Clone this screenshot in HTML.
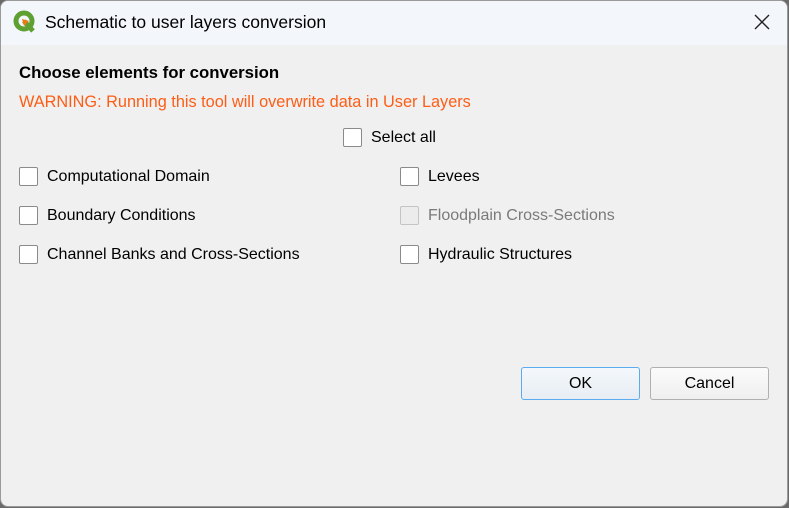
<!DOCTYPE html>
<html><head><style>
body{margin:0;width:789px;height:508px;background:#6a6a6a;font-family:"Liberation Sans",sans-serif;overflow:hidden;position:relative}
.win{position:absolute;left:0;top:0;width:788px;height:507px;background:#f0f0f0;border-radius:8px;overflow:hidden;border:1px solid #9a9a9a;box-sizing:border-box}
.title{position:absolute;left:0;top:0;right:0;height:44px;background:#f3f6fb}
.t{position:absolute;font-size:16px;color:#000;white-space:nowrap}
.cb{position:absolute;width:19px;height:19px;background:#fff;border:1px solid #8a8a8a;border-radius:2px;box-sizing:border-box}
.cb.d{background:#ececec;border-color:#c4c4c4}
.btn{position:absolute;top:366px;width:119px;height:33px;box-sizing:border-box;border:1px solid #b0b0b0;border-radius:3px;background:linear-gradient(#fbfbfb,#efefef);font-size:16px;text-align:center;line-height:31px}
</style></head><body>
<div class="win">
<div class="title">
<svg style="position:absolute;left:12px;top:9px" width="24" height="24" viewBox="0 0 24 24">
<circle cx="11" cy="11" r="8" fill="none" stroke="#5fa032" stroke-width="5"/>
<path d="M11 11 L20 21" stroke="#5fa032" stroke-width="5"/>
<path d="M9 9 L16 11 L11 16 Z" fill="#ee7913"/>
</svg>
<div class="t" style="left:44px;top:11px;font-size:17.5px">Schematic to user layers conversion</div>
<svg style="position:absolute;left:753px;top:13px" width="16" height="16"><path d="M1 1L15 15M15 1L1 15" stroke="#222" stroke-width="1.4"/></svg>
</div>
<div class="t" style="left:18px;top:62px;font-weight:bold;font-size:16.8px">Choose elements for conversion</div>
<div class="t" style="left:18px;top:92px;color:#fd5d16;font-size:16.3px">WARNING: Running this tool will overwrite data in User Layers</div>
<div class="cb" style="left:342px;top:127px"></div><div class="t" style="left:370px;top:128px">Select all</div>
<div class="cb" style="left:18px;top:166px"></div><div class="t" style="left:46px;top:167px">Computational Domain</div>
<div class="cb" style="left:18px;top:205px"></div><div class="t" style="left:46px;top:206px">Boundary Conditions</div>
<div class="cb" style="left:18px;top:244px"></div><div class="t" style="left:46px;top:245px">Channel Banks and Cross-Sections</div>
<div class="cb" style="left:399px;top:166px"></div><div class="t" style="left:427px;top:167px">Levees</div>
<div class="cb d" style="left:399px;top:205px"></div><div class="t" style="left:427px;top:206px;color:#7a7a7a">Floodplain Cross-Sections</div>
<div class="cb" style="left:399px;top:244px"></div><div class="t" style="left:427px;top:245px">Hydraulic Structures</div>
<div class="btn" style="left:520px;border-color:#5aabf0;background:linear-gradient(#f4f8fc,#e7edf3)">OK</div>
<div class="btn" style="left:649px">Cancel</div>
</div>
</body></html>
